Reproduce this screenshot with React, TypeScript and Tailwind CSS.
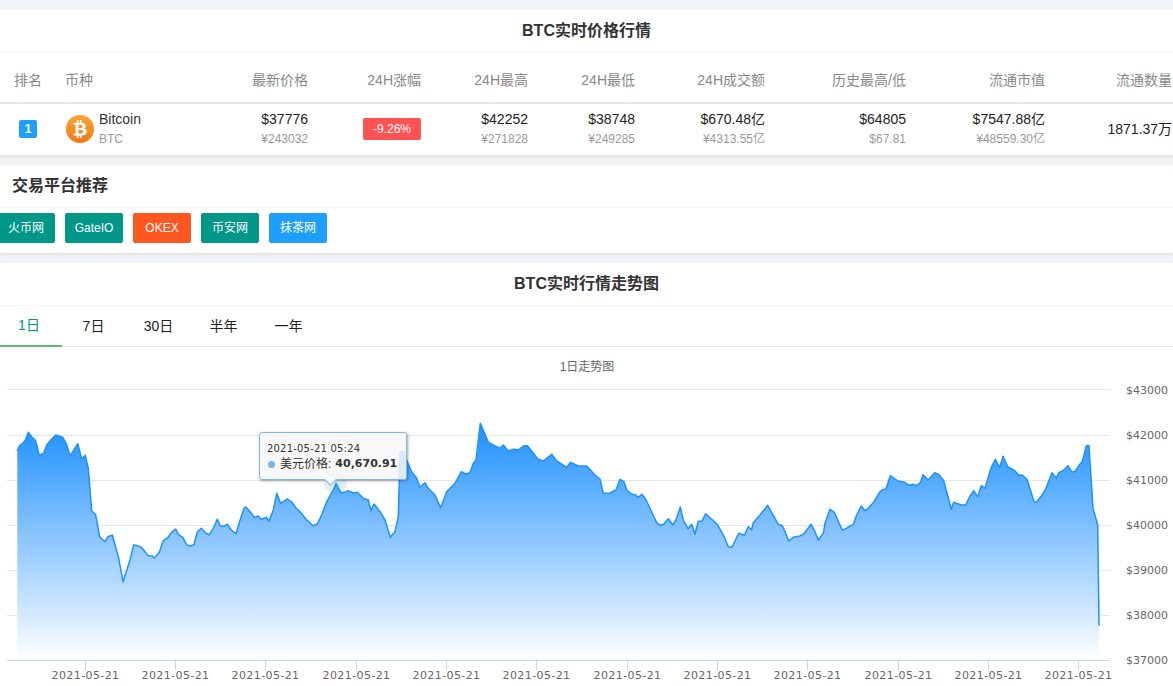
import { FaBtc } from "react-icons/fa";

const font = "font-['Liberation_Sans','Noto_Sans_CJK_SC',sans-serif]";

const columns = "grid grid-cols-[56px_252px_113px_107px_107px_130px_141px_139px_127px]";

const headers = ["最新价格", "24H涨幅", "24H最高", "24H最低", "24H成交额", "历史最高/低", "流通市值", "流通数量"];

const platforms = [
  { name: "火币网", color: "bg-[#009688]" },
  { name: "GateIO", color: "bg-[#009688]" },
  { name: "OKEX", color: "bg-[#ff5722]" },
  { name: "币安网", color: "bg-[#009688]" },
  { name: "抹茶网", color: "bg-[#1e9fff]" },
];

const tabs = ["1日", "7日", "30日", "半年", "一年"];

const yLabels = [43000, 42000, 41000, 40000, 39000, 38000, 37000];
const gridYs = [389.5, 435.5, 480.5, 525.5, 570.5, 615.5];
const ticks = [85.5, 175.5, 265.5, 356.5, 446.5, 536.5, 627.5, 717.5, 807.5, 898.5, 988.5, 1078.5];

// traced from the crops at 3x, [left offset, x, y, x, y, ...]
const traces: number[][] = [
  [0, 52, 213, 58, 198, 75, 183, 85, 157, 95, 170, 107, 182, 118, 227, 131, 219, 140, 195, 155, 177, 167, 165, 188, 172, 198, 190, 211, 228, 233, 191, 245, 237, 256, 226, 265, 265, 275, 392, 287, 405, 299, 470, 315, 485, 324, 470, 337, 465, 356, 535, 369, 605, 390, 540, 401, 495, 413, 497, 425, 503, 445, 527, 457, 528, 463, 535, 478, 517, 490, 482, 503, 473, 515, 457, 527, 447, 535, 463, 549, 473, 560, 495, 572, 498, 582, 494, 592, 456, 604, 445, 618, 460, 628, 464, 640, 445, 652, 418, 661, 438, 672, 438, 682, 433, 694, 450, 708, 461, 722, 415, 733, 383, 738, 381, 750, 395, 764, 413, 774, 408, 783, 418, 800, 412, 807, 424, 820, 390, 830, 340, 842, 370, 862, 357, 875, 366, 888, 384],
  [300, 0, 395, 20, 420, 40, 437, 52, 432, 65, 405, 80, 365, 100, 330, 108, 310, 122, 338, 135, 337, 145, 332, 160, 339, 172, 337, 190, 355, 205, 360, 213, 392, 222, 372, 240, 395, 255, 420, 271, 472, 285, 455, 295, 410, 298, 300, 300, 215, 310, 215, 322, 245, 335, 275, 350, 295, 360, 322, 375, 308, 385, 325, 405, 345, 422, 383, 440, 335, 465, 310, 484, 275, 497, 282, 510, 278, 520, 250, 528, 240, 541, 130, 552, 155, 565, 187, 585, 198, 600, 205, 610, 195, 625, 213, 640, 208, 655, 210, 672, 197, 682, 197, 695, 213, 713, 237, 730, 243, 755, 223, 770, 243, 800, 262, 812, 247, 835, 258, 860, 258, 885, 285],
  [600, 0, 297, 10, 340, 30, 339, 48, 330, 60, 298, 72, 305, 80, 330, 95, 342, 105, 344, 115, 352, 125, 343, 137, 358, 150, 385, 170, 428, 180, 436, 192, 432, 205, 416, 218, 435, 228, 420, 241, 381, 250, 420, 264, 446, 275, 433, 285, 463, 295, 424, 306, 423, 317, 401, 335, 418, 352, 433, 370, 465, 385, 500, 396, 502, 416, 460, 433, 466, 445, 440, 455, 449, 460, 428, 480, 405, 503, 376, 535, 433, 547, 437, 555, 455, 566, 483, 580, 472, 600, 468, 612, 461, 633, 433, 645, 455, 655, 480, 670, 460, 675, 430, 690, 388, 703, 397, 727, 451, 760, 433, 770, 405, 784, 378, 795, 392, 808, 382, 822, 365, 840, 335, 850, 328, 858, 327],
  [873, 52, 287, 75, 303, 95, 307, 108, 316, 120, 313, 130, 317, 143, 307, 150, 284, 165, 300, 185, 278, 198, 284, 212, 302, 235, 388, 242, 367, 265, 375, 278, 375, 290, 350, 302, 332, 314, 350, 325, 317, 336, 325, 355, 262, 367, 238, 380, 263, 390, 229, 405, 261, 425, 272, 437, 286, 448, 285, 462, 298, 483, 365, 490, 367, 505, 348, 517, 330, 537, 278, 550, 294, 557, 278, 570, 272, 585, 257, 597, 277, 607, 273, 620, 253, 628, 245, 640, 197, 648, 197, 660, 385, 674, 435, 678, 737],
];

const points = traces.flatMap(([left, ...rest]) => {
  const out: string[] = [];
  for (let i = 0; i < rest.length; i += 2) {
    out.push(`${(left + rest[i] / 3).toFixed(1)},${(380 + rest[i + 1] / 3).toFixed(1)}`);
  }
  return out;
});
const linePath = "M" + points.join("L");
const areaPath = linePath + "L1099.5,660L17.3,660Z";

function Cell({ top, sub }: { top: string; sub: string }) {
  return (
    <div className="flex flex-col items-end justify-center">
      <span className="text-sm leading-[20px] text-[#222]">{top}</span>
      <span className="mt-[1px] text-xs leading-[18px] text-[#999]">{sub}</span>
    </div>
  );
}

function CardTitle({ children }: { children: string }) {
  return (
    <div className="flex h-[43px] items-center justify-center border-b border-[#f6f6f6] text-base font-bold text-[#333]">
      {children}
    </div>
  );
}

function PriceTable() {
  return (
    <section className="bg-white shadow-[0_2px_3px_rgba(0,0,0,0.08)]">
      <CardTitle>BTC实时价格行情</CardTitle>
      <div className={`${columns} h-[51px] items-center border-b-2 border-[#e6e6e6] pt-[5px] text-sm text-[#888]`}>
        <div className="text-center">排名</div>
        <div className="flex justify-between pl-[9px]">
          <span>币种</span>
          <span>{headers[0]}</span>
        </div>
        {headers.slice(1).map((h) => (
          <div key={h} className="text-right">{h}</div>
        ))}
      </div>
      <div className={`${columns} h-[51px] items-center pb-[2px]`}>
        <div className="flex justify-center pt-[1px]">
          <span className="flex h-[18px] w-[18px] items-center justify-center rounded-[2px] bg-[#1e9fff] text-xs font-bold text-white">1</span>
        </div>
        <div className="flex items-center pl-[10px]">
          <span className="flex h-[28px] w-[28px] items-center justify-center rounded-full bg-gradient-to-b from-[#f9a434] to-[#ee7a10] text-[18px] text-white">
            <FaBtc />
          </span>
          <div className="ml-[5px] flex flex-col">
            <span className="text-sm leading-[20px] text-[#333]">Bitcoin</span>
            <span className="mt-[1px] text-xs leading-[18px] text-[#999]">BTC</span>
          </div>
          <div className="ml-auto">
            <Cell top="$37776" sub="¥243032" />
          </div>
        </div>
        <div className="flex justify-end">
          <span className="flex h-[22px] w-[58px] items-center justify-center rounded-[2px] bg-[#ff5252] text-xs text-white">-9.26%</span>
        </div>
        <Cell top="$42252" sub="¥271828" />
        <Cell top="$38748" sub="¥249285" />
        <Cell top="$670.48亿" sub="¥4313.55亿" />
        <Cell top="$64805" sub="$67.81" />
        <Cell top="$7547.88亿" sub="¥48559.30亿" />
        <div className="text-right text-sm text-[#222]">1871.37万</div>
      </div>
    </section>
  );
}

function Platforms() {
  return (
    <section className="mt-[10px] bg-white shadow-[0_2px_3px_rgba(0,0,0,0.08)]">
      <div className="flex h-[43px] items-center border-b border-[#f6f6f6] pl-3 text-base font-bold text-[#333]">交易平台推荐</div>
      <div className="-ml-[3px] flex h-[45px] gap-[10px] pt-[5px]">
        {platforms.map((p) => (
          <span key={p.name} className={`flex h-[30px] w-[58px] items-center justify-center rounded-[2px] text-xs text-white ${p.color}`}>
            {p.name}
          </span>
        ))}
      </div>
    </section>
  );
}

function Chart() {
  return (
    <div className="relative h-[339px]">
      <svg className="block" width="1173" height="339" viewBox="0 347 1173 339">
        <defs>
          <linearGradient id="area" x1="0" y1="423" x2="0" y2="660" gradientUnits="userSpaceOnUse">
            <stop offset="0" stopColor="#1e90ff" />
            <stop offset="1" stopColor="#1e90ff" stopOpacity="0" />
          </linearGradient>
        </defs>
        <text x="587" y="371" textAnchor="middle" fontSize="12" fill="#666" fontFamily="'Liberation Sans','Noto Sans CJK SC',sans-serif">1日走势图</text>
        {gridYs.map((y) => (
          <line key={y} x1="7" x2="1110" y1={y} y2={y} stroke="#e6e6e6" />
        ))}
        <path d={areaPath} fill="#fff" />
        <path d={areaPath} fill="url(#area)" />
        <path d={linePath} fill="none" stroke="#1e90ff" strokeWidth="1.5" strokeLinejoin="round" />
        <circle cx="335.5" cy="483" r="11" fill="#1e90ff" opacity="0.15" />
        <line x1="7" x2="1110" y1="660.5" y2="660.5" stroke="#ccd6eb" />
        {ticks.map((x) => (
          <g key={x}>
            <line x1={x} x2={x} y1="661" y2="670" stroke="#ccd6eb" />
            <text x={x} y="678.5" textAnchor="middle" fontSize="11" letterSpacing="0.4" fill="#666" fontFamily="'DejaVu Sans',sans-serif">2021-05-21</text>
          </g>
        ))}
        {yLabels.map((v, i) => (
          <text key={v} x="1126" y={393.5 + i * 45} fontSize="11" fill="#666" fontFamily="'DejaVu Sans',sans-serif">${v}</text>
        ))}
      </svg>
      {/* tooltip sits over the chart */}
      <div className="absolute left-[259px] top-[85px] h-[48px] w-[148px] rounded-[3px] border border-[#7cb5ec] bg-[#f7f7f7]/85 pl-[7px] pt-[9px] shadow-[1px_1px_3px_rgba(0,0,0,0.35)]">
        <div className="font-['DejaVu_Sans',sans-serif] text-[10px] leading-[13px] tracking-[0.2px] text-[#333]">2021-05-21 05:24</div>
        <div className="flex items-center pt-[1px] text-xs leading-[16px] text-[#333]">
          <span className="mr-[5px] ml-[1px] h-[7px] w-[7px] rounded-full bg-[#7cb5ec]" />
          <span>美元价格:</span>
          <span className="ml-[4px] font-['DejaVu_Sans',sans-serif] text-[11px] font-bold">40,670.91</span>
        </div>
        <span className="absolute left-[66px] top-[42px] h-[9px] w-[9px] rotate-45 border-b border-r border-[#7cb5ec] bg-[#f7f7f7]" />
      </div>
    </div>
  );
}

function Trend() {
  return (
    <section className="mt-[10px] bg-white">
      <CardTitle>BTC实时行情走势图</CardTitle>
      <div className="flex h-[41px] border-b border-[#e2e2e2] text-sm">
        {tabs.map((t, i) => (
          <div
            key={t}
            className={`flex h-[41px] flex-none items-center justify-center pb-[2px] ${i === 0 ? "-ml-[4px] -mr-px w-[66px] border-b-2 border-[#5fb878] text-[#009688]" : "w-[65px] text-[#222]"}`}
          >
            {t}
          </div>
        ))}
      </div>
      <Chart />
    </section>
  );
}

export default function App() {
  return (
    <div className={`h-[686px] w-[1173px] overflow-hidden bg-[#f2f3f5] pt-[10px] ${font}`}>
      <PriceTable />
      <Platforms />
      <Trend />
    </div>
  );
}
